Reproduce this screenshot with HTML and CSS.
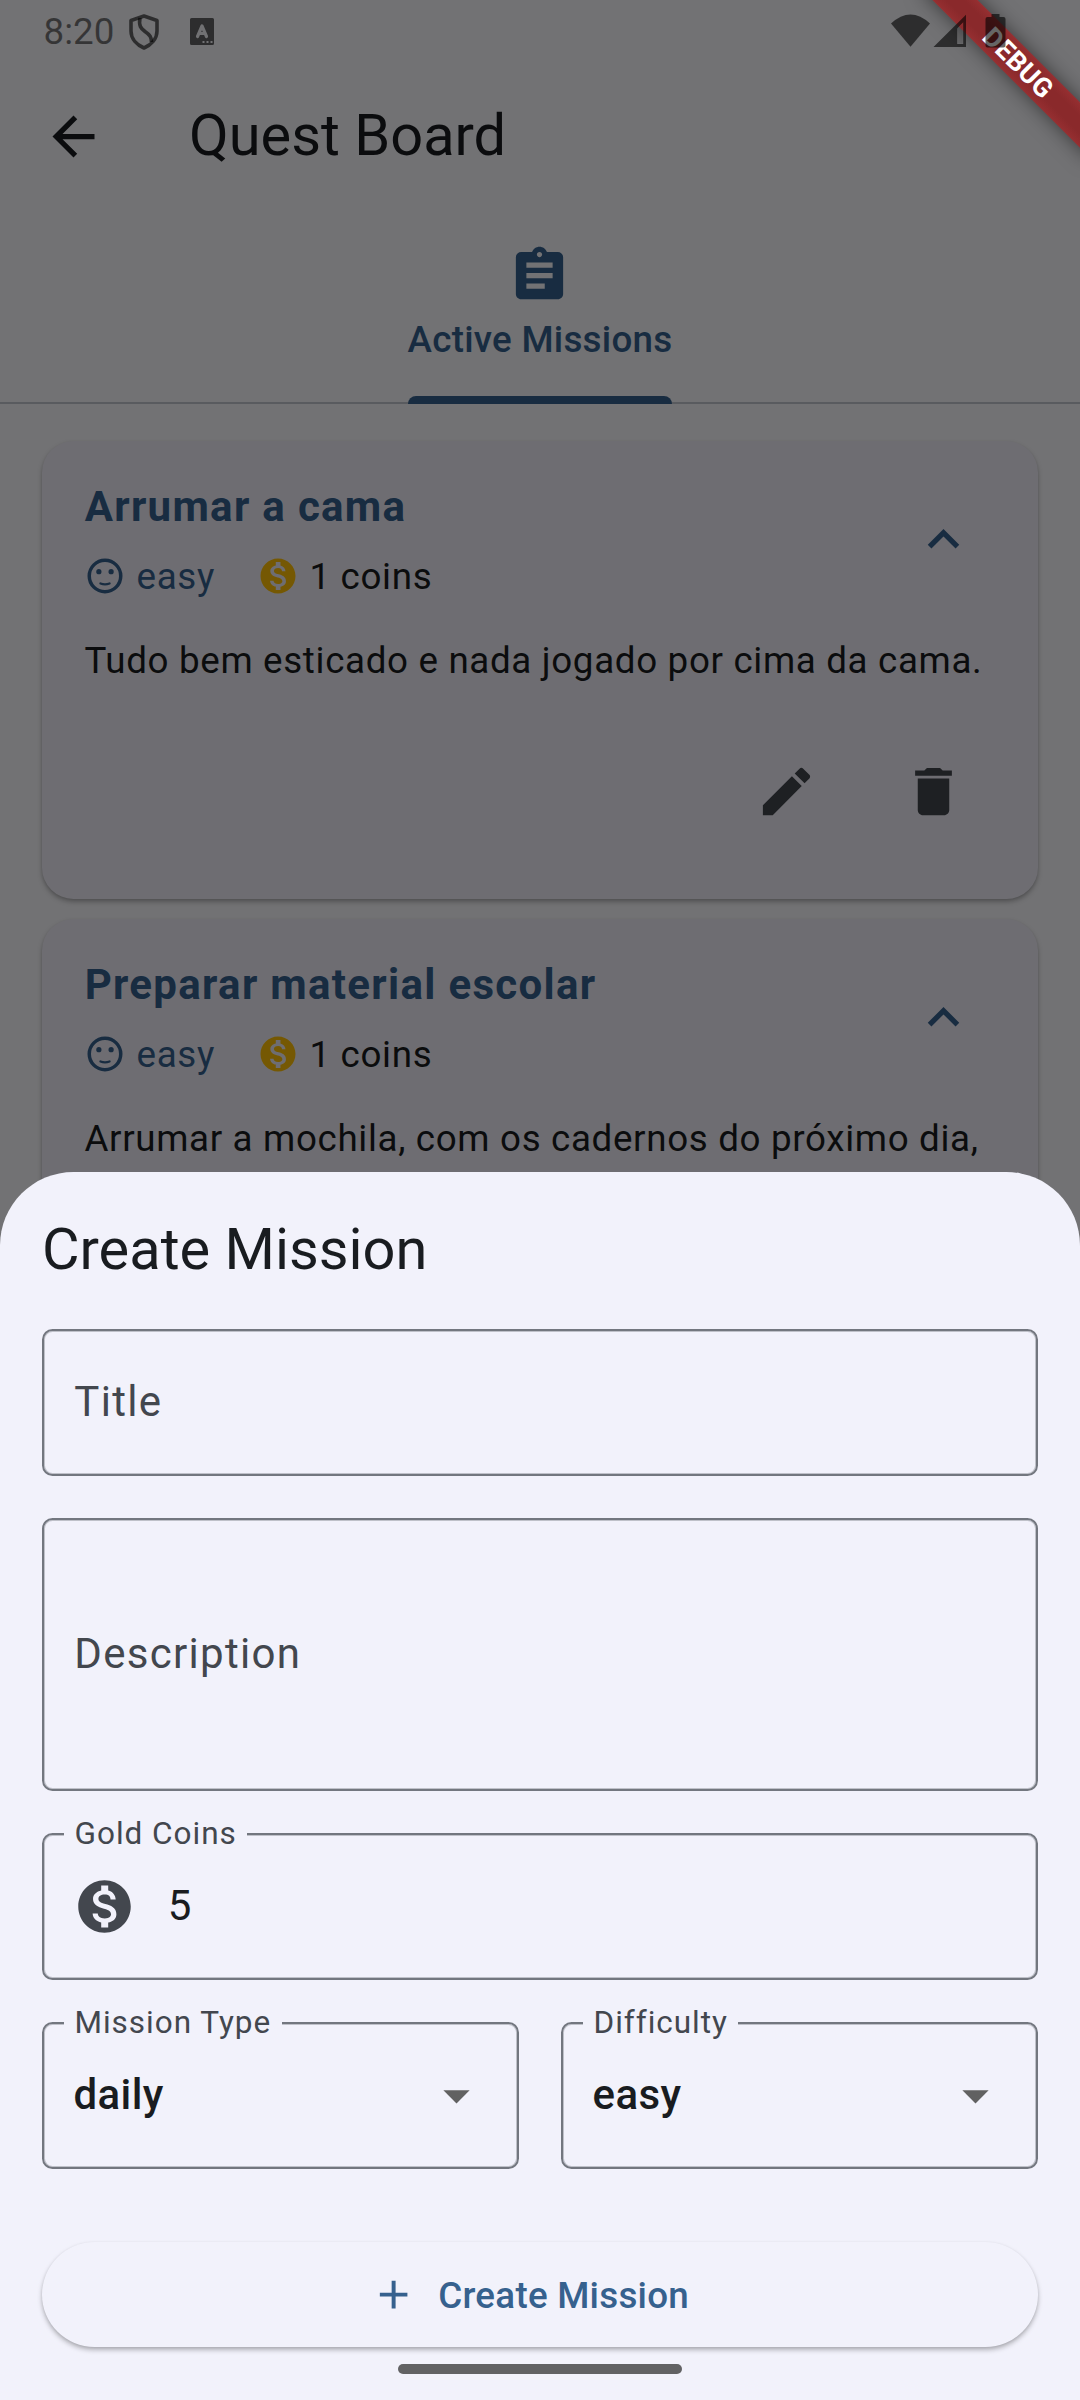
FILE: index.html
```html
<!DOCTYPE html>
<html lang="en">
<head>
<meta charset="utf-8">
<title>Quest Board</title>
<link rel="stylesheet" href="styles.css">
</head>
<body>
<svg class="sprite" aria-hidden="true">
  <symbol id="coin" viewBox="0 0 24 24"><path d="M12 2C6.48 2 2 6.48 2 12s4.480 10 10 10 10-4.480 10-10S17.520 2 12 2zm1.410 16.090V20h-2.670v-1.930c-1.710-.36-3.160-1.460-3.270-3.400h1.960c.1 1.050.82 1.870 2.650 1.870 1.960 0 2.400-.98 2.400-1.590 0-.83-.44-1.610-2.670-2.140-2.480-.6-4.180-1.620-4.180-3.670 0-1.720 1.390-2.840 3.110-3.210V4h2.670v1.950c1.860.45 2.790 1.860 2.850 3.390H14.300c-.05-1.110-.64-1.870-2.220-1.870-1.500 0-2.400.68-2.400 1.640 0 .84.65 1.390 2.670 1.910s4.180 1.390 4.180 3.910c-.010 1.830-1.380 2.830-3.120 3.160z"/></symbol>
  <symbol id="face" viewBox="0 0 24 24"><circle cx="12" cy="12" r="9" fill="none" stroke="currentColor" stroke-width="2"/><circle cx="8.500" cy="9.500" r="1.500"/><circle cx="15.500" cy="9.500" r="1.500"/><path d="M9.400 16.300q2.600 1 5.200 0" fill="none" stroke="currentColor" stroke-width="1.300" stroke-linecap="round"/></symbol>
  <symbol id="chevron" viewBox="0 0 24 24"><path d="M12 8l-6 6 1.410 1.410L12 10.830l4.590 4.580L18 14z"/></symbol>
  <symbol id="edit" viewBox="0 0 24 24"><path d="M3 17.250V21h3.750L17.810 9.940l-3.750-3.750L3 17.250zM20.710 7.040c.39-.39.39-1.020 0-1.410l-2.340-2.340c-.39-.39-1.020-.39-1.410 0l-1.830 1.830 3.750 3.750 1.830-1.830z"/></symbol>
  <symbol id="trash" viewBox="0 0 24 24"><path d="M6 19c0 1.100.9 2 2 2h8c1.100 0 2-.9 2-2V7H6v12zM19 4h-3.500l-1-1h-5l-1 1H5v2h14V4z"/></symbol>
  <symbol id="drop" viewBox="0 0 24 24"><path d="M7 10l5 5 5-5z"/></symbol>
</svg>

<div class="screen">
  <div class="app">
    <header class="appbar">
      <svg class="icon" viewBox="0 0 24 24"><path d="M20 11H7.830l5.590-5.590L12 4l-8 8 8 8 1.410-1.410L7.830 13H20v-2z"/></svg>
      <h1 class="appbar-title">Quest Board</h1>
    </header>
    <nav class="tabs">
      <div class="tab">
        <svg class="icon" viewBox="0 0 24 24"><path d="M19 3h-4.180C14.400 1.840 13.300 1 12 1c-1.300 0-2.400.84-2.820 2H5c-1.100 0-2 .9-2 2v14c0 1.100.9 2 2 2h14c1.100 0 2-.9 2-2V5c0-1.100-.9-2-2-2zm-7 0c.55 0 1 .45 1 1s-.45 1-1 1-1-.45-1-1 .45-1 1-1zm2 14H7v-2h7v2zm3-4H7v-2h10v2zm0-4H7V7h10v2z"/></svg>
        <span class="tab-label">Active Missions</span>
      </div>
    </nav>
    <main class="list">
      <article class="card">
        <div class="card-head">
          <div>
            <h2 class="card-title">Arrumar a cama</h2>
            <div class="meta">
              <span class="meta-item level"><svg class="icon-s"><use href="#face"/></svg>easy</span>
              <span class="meta-item"><svg class="icon-s gold"><use href="#coin"/></svg>1 coins</span>
            </div>
          </div>
          <svg class="icon chevron"><use href="#chevron"/></svg>
        </div>
        <p class="card-text">Tudo bem esticado e nada jogado por cima da cama.</p>
        <div class="actions">
          <svg class="icon"><use href="#edit"/></svg>
          <svg class="icon"><use href="#trash"/></svg>
        </div>
      </article>
      <article class="card">
        <div class="card-head">
          <div>
            <h2 class="card-title">Preparar material escolar</h2>
            <div class="meta">
              <span class="meta-item level"><svg class="icon-s"><use href="#face"/></svg>easy</span>
              <span class="meta-item"><svg class="icon-s gold"><use href="#coin"/></svg>1 coins</span>
            </div>
          </div>
          <svg class="icon chevron"><use href="#chevron"/></svg>
        </div>
        <p class="card-text">Arrumar a mochila, com os cadernos do próximo dia,</p>
      </article>
    </main>
  </div>

  <div class="scrim"></div>

  <section class="sheet">
    <h2 class="sheet-title">Create Mission</h2>
    <div class="field">Title</div>
    <div class="field field-tall">Description</div>
    <div class="field field-value">
      <span class="label">Gold Coins</span>
      <svg class="icon field-icon"><use href="#coin"/></svg>
      <span class="amount">5</span>
    </div>
    <div class="pair">
      <div class="field field-value select">
        <span class="label">Mission Type</span>
        <span>daily</span>
        <svg class="icon drop"><use href="#drop"/></svg>
      </div>
      <div class="field field-value select">
        <span class="label">Difficulty</span>
        <span>easy</span>
        <svg class="icon drop"><use href="#drop"/></svg>
      </div>
    </div>
    <div class="button">
      <svg class="icon-add" viewBox="0 0 24 24"><path d="M19 13h-6v6h-2v-6H5v-2h6V5h2v6h6v2z"/></svg>
      <span class="button-text">Create Mission</span>
    </div>
    <div class="home-bar"></div>
  </section>

  <div class="ribbon">DEBUG</div>

  <div class="status">
    <span class="clock">8:20</span>
    <svg class="shield" viewBox="0 0 30 36"><g fill="none" stroke="currentColor" stroke-width="3.600" stroke-linejoin="round"><path d="M15 2L28 6.500V17C28 25 22 31 15 34C8 31 2 25 2 17V6.500Z"/><path d="M11 4C9.500 12 12 14.500 16 17.500C21 21 22.500 23 22.500 28"/></g></svg>
    <svg class="badge" viewBox="0 0 24 27"><path fill-rule="evenodd" d="M1.500 0h21A1.500 1.500 0 0 1 24 1.500v24a1.500 1.500 0 0 1-1.500 1.500h-21A1.500 1.500 0 0 1 0 25.500v-24A1.500 1.500 0 0 1 1.500 0zM12.500 23v2h2v-2zm4 0v2h2v-2zm4 0v2h2v-2z"/><path d="M7.500 18.500L12 8l4.500 10.500M9 15.500h6" fill="none" stroke="#717173" stroke-width="3.200" stroke-linecap="round" stroke-linejoin="round"/></svg>
    <svg class="signals" viewBox="0 0 115 34"><path d="M0 9.500Q19.500-8.500 39 9.500L19.500 32.700z"/><path fill-rule="evenodd" d="M75 .7V33H42.500zM72.200 8.300L66.200 14.500V30h6z"/><path d="M66.700 14.500v15h5v-19z" opacity=".12"/><path d="M100.500 0h8v3h4q2 0 2 2v26.500q0 2-2 2h-16q-2 0-2-2V5q0-2 2-2h4z"/></svg>
  </div>
</div>
</body>
</html>
```
FILE: styles.css
```css
* { box-sizing: border-box; }

body {
  margin: 0;
  font-family: Roboto, sans-serif;
  color: #191c20;
}

h1, h2, p { margin: 0; font-weight: 400; }

svg { display: block; fill: currentColor; flex: none; }

.sprite { position: absolute; width: 0; height: 0; }

.screen {
  position: relative;
  width: 1080px;
  height: 2400px;
  overflow: hidden;
  background: #f8f8fc;
}

.icon { width: 63px; height: 63px; }

/* App behind the sheet */
.app { padding-top: 63px; }

.appbar {
  display: flex;
  align-items: center;
  height: 147px;
  padding-left: 42px;
  gap: 84px;
}

.appbar-title { padding-bottom: 3px; font-size: 57.75px; line-height: 74px; }

.tabs {
  display: flex;
  justify-content: center;
  height: 194px;
  border-bottom: 2px solid #c3c6cf;
}

.tab {
  display: flex;
  flex-direction: column;
  align-items: center;
  height: 194px;
  padding-top: 34px;
  gap: 6px;
  color: #36618e;
}

.tab-label {
  font-size: 36.75px;
  font-weight: 500;
  line-height: 53px;
  letter-spacing: 0.26px;
}

.tab::after {
  content: "";
  width: 100%;
  height: 8px;
  margin-top: auto;
  border-radius: 8px 8px 0 0;
  background: #36618e;
}

.list {
  display: flex;
  flex-direction: column;
  gap: 20px;
  padding: 37px 42px 0;
}

.card {
  height: 458px;
  padding: 34px 42px 0;
  border-radius: 31.5px;
  background: #f0eef8;
  box-shadow: 0 3px 5px rgba(0, 0, 0, .26), 0 1px 3px rgba(0, 0, 0, .08);
}

.card-head {
  display: flex;
  justify-content: space-between;
  height: 123px;
}

.card-title {
  padding-left: 0.7px;
  font-size: 42px;
  font-weight: 700;
  line-height: 63px;
  letter-spacing: 1.31px;
  color: #36618e;
}

.meta {
  display: flex;
  gap: 42px;
  padding-top: 12px;
}

.meta-item {
  display: flex;
  align-items: center;
  gap: 10.5px;
  height: 52px;
  font-size: 36.75px;
  letter-spacing: 0.66px;
}

.level { color: #36618e; }
.gold { color: #ffc107; }
.icon-s { width: 42px; height: 42px; }

.chevron { margin: 33px 21px 0 0; color: #36618e; }

.card-text {
  margin-top: 36px;
  padding-left: 0.4px;
  font-size: 36.75px;
  line-height: 53px;
  letter-spacing: 0.66px;
  white-space: nowrap;
}

.actions {
  display: flex;
  justify-content: flex-end;
  gap: 84px;
  padding: 73px 31.5px 0 0;
  color: #43474e;
}

.scrim {
  position: absolute;
  inset: 0;
  background: rgba(0, 0, 0, .54);
}

/* Bottom sheet */
.sheet {
  position: absolute;
  left: 0;
  right: 0;
  bottom: 0;
  display: flex;
  flex-direction: column;
  gap: 42px;
  height: 1228.500px;
  padding: 40px 42px 0;
  border-radius: 73.5px 73.5px 0 0;
  background: #f2f2fb;
}

.sheet-title { margin-bottom: 1px; font-size: 57.75px; line-height: 74px; }

.field {
  position: relative;
  display: flex;
  align-items: center;
  height: 147px;
  padding: 0 29.5px 1px 30.3px;
  border: 2px solid #73777f;
  border-radius: 10.5px;
  box-shadow: inset 0 0 0 1px rgba(115, 119, 127, .4);
  font-size: 42px;
  letter-spacing: 1.31px;
  color: #43474e;
}

.field-tall { height: 273px; }
.field-value { color: #191c20; }

.label {
  position: absolute;
  top: -21px;
  left: 20px;
  padding: 0 10.5px;
  background: #f2f2fb;
  font-size: 31.5px;
  line-height: 40px;
  letter-spacing: 0.98px;
  color: #43474e;
}

.field-icon { margin-top: 1px; margin-left: -1px; color: #43474e; }
.amount { margin-left: 31.5px; }

.pair { display: grid; grid-template-columns: 1fr 1fr; gap: 42px; }

.select {
  justify-content: space-between;
  padding-left: 29.5px;
  font-weight: 500;
  letter-spacing: 0.4px;
}

.select .label { font-weight: 400; }
.drop { margin-top: 1px; color: #616161; }

.button {
  display: flex;
  justify-content: center;
  align-items: center;
  gap: 21px;
  height: 105px;
  margin-top: 31.500px;
  padding-right: 21px;
  border-radius: 53px;
  background: #f2f2fb;
  box-shadow: 0 3px 5px rgba(0, 0, 0, .26), 0 1px 3px rgba(0, 0, 0, .08);
  font-size: 36.75px;
  font-weight: 500;
  letter-spacing: 0.26px;
  color: #36618e;
}

.button-text { padding-top: 2px; }

.icon-add { width: 47.25px; height: 47.25px; }

.home-bar {
  align-self: center;
  width: 284px;
  height: 10px;
  margin-top: -25px;
  border-radius: 5px;
  background: #626264;
}

/* Overlays above everything */
.ribbon {
  position: absolute;
  left: 897.5px;
  top: 46.75px;
  width: 240px;
  height: 32px;
  transform: rotate(45deg);
  background: linear-gradient(#962f31, #8a292b 30%, #8a292b 70%, #962f31);
  box-shadow: 0 0 20px rgba(0, 0, 0, .5);
  color: #fff;
  font-size: 26.8px;
  font-weight: 700;
  line-height: 32px;
  letter-spacing: 0.3px;
  text-align: center;
}

.status {
  position: absolute;
  inset: 0 0 auto 0;
  display: flex;
  height: 63px;
  padding: 14px 74px 0 43.5px;
  color: rgba(0, 0, 0, .6);
}

.clock { margin-top: -4px; font-size: 36.75px; line-height: 43px; color: rgba(0, 0, 0, .53); }
.shield { width: 30px; height: 36px; margin-left: 15px; }
.badge { width: 24px; height: 27px; margin: 4px 0 0 31px; }
.signals { width: 115px; height: 34px; margin-left: auto; }
```
